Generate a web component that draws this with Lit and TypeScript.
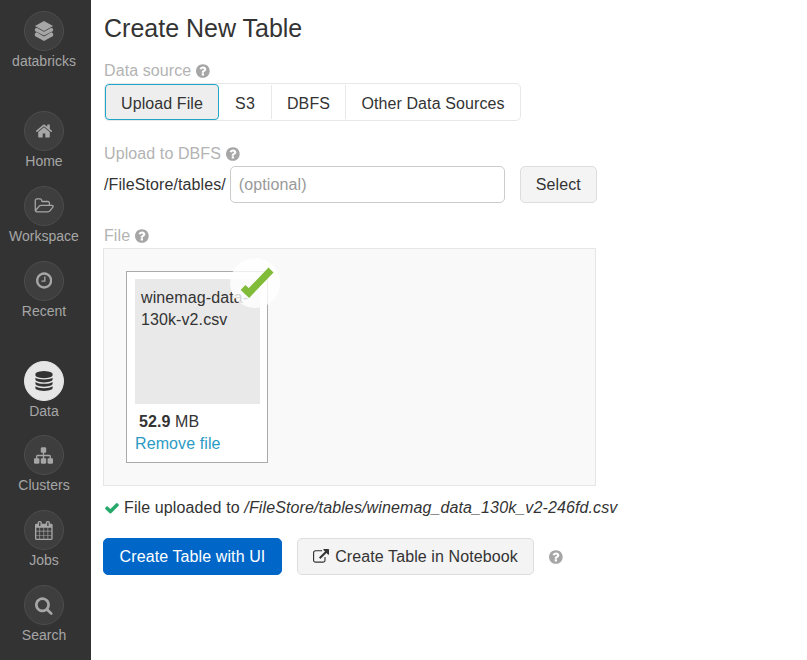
import { LitElement, html, css, svg } from 'lit';
import { customElement } from 'lit/decorators.js';

// font-awesome 4 glyphs, [viewBox width, path]
const ICONS: Record<string, [number, string]> = {
  home: [1792, 'M1472 992v480q0 26-19 45t-45 19h-384v-384h-256v384h-384q-26 0-45-19t-19-45v-480q0-1 .5-3t.5-3l575-474 575 474q1 2 1 6zm223-69l-62 74q-8 9-21 11h-3q-13 0-21-7l-692-577-692 577q-12 8-24 7-13-2-21-11l-62-74q-8-10-7-23.500t11-21.500l719-599q32-26 76-26t76 26l244 204v-195q0-14 9-23t23-9h192q14 0 23 9t9 23v408l219 182q10 8 11 21.500t-7 23.500z'],
  folder: [1976, 'M1845 931q0-35-53-35h-1088q-40 0-85.500 21.500t-71.500 52.500l-294 363q-18 24-18 40 0 35 53 35h1088q40 0 86-22t71-53l294-363q18-22 18-39zm-1141-163h768v-160q0-40-28-68t-68-28h-576q-40 0-68-28t-28-68v-64q0-40-28-68t-68-28h-320q-40 0-68 28t-28 68v853l256-315q44-53 116-87.500t140-34.500zm1269 163q0 62-46 120l-295 363q-43 53-116 87.500t-140 34.500h-1088q-92 0-158-66t-66-158v-960q0-92 66-158t158-66h320q92 0 158 66t66 158v32h544q92 0 158 66t66 158v160h192q54 0 99 24.500t67 70.500q15 32 15 68z'],
  clock: [1536, 'M896 544v448q0 14-9 23t-23 9h-320q-14 0-23-9t-9-23v-64q0-14 9-23t23-9h224v-352q0-14 9-23t23-9h64q14 0 23 9t9 23zm416 352q0-148-73-273t-198-198-273-73-273 73-198 198-73 273 73 273 198 198 273 73 273-73 198-198 73-273zm224 0q0 209-103 385.500t-279.500 279.500-385.500 103-385.500-103-279.500-279.500-103-385.500 103-385.500 279.500-279.500 385.500-103 385.500 103 279.500 279.500 103 385.500z'],
  database: [1792, 'M896 768q237 0 443-43t325-127v170q0 69-103 128t-280 93.500-385 34.500-385-34.500-280-93.500-103-128v-170q119 84 325 127t443 43zm0 768q237 0 443-43t325-127v170q0 69-103 128t-280 93.500-385 34.500-385-34.500-280-93.500-103-128v-170q119 84 325 127t443 43zm0-384q237 0 443-43t325-127v170q0 69-103 128t-280 93.500-385 34.500-385-34.500-280-93.500-103-128v-170q119 84 325 127t443 43zm0-1152q208 0 385 34.500t280 93.500 103 128v128q0 69-103 128t-280 93.500-385 34.500-385-34.500-280-93.500-103-128v-128q0-69 103-128t280-93.500 385-34.500z'],
  sitemap: [1792, 'M1792 1248v320q0 40-28 68t-68 28h-320q-40 0-68-28t-28-68v-320q0-40 28-68t68-28h96v-192h-512v192h96q40 0 68 28t28 68v320q0 40-28 68t-68 28h-320q-40 0-68-28t-28-68v-320q0-40 28-68t68-28h96v-192h-512v192h96q40 0 68 28t28 68v320q0 40-28 68t-68 28h-320q-40 0-68-28t-28-68v-320q0-40 28-68t68-28h96v-192q0-52 38-90t90-38h512v-192h-96q-40 0-68-28t-28-68v-320q0-40 28-68t68-28h320q40 0 68 28t28 68v320q0 40-28 68t-68 28h-96v192h512q52 0 90 38t38 90v192h96q40 0 68 28t28 68z'],
  calendar: [1664, 'M128 1664h288v-288h-288v288zm352 0h320v-288h-320v288zm-352-352h288v-320h-288v320zm352 0h320v-320h-320v320zm-352-384h288v-288h-288v288zm736 736h320v-288h-320v288zm-384-736h320v-288h-320v288zm768 736h288v-288h-288v288zm-384-352h320v-320h-320v320zm-352-864v-288q0-13-9.500-22.500t-22.500-9.500h-64q-13 0-22.500 9.500t-9.500 22.500v288q0 13 9.500 22.500t22.500 9.500h64q13 0 22.500-9.500t9.500-22.500zm736 864h288v-320h-288v320zm-384-384h320v-288h-320v288zm384 0h288v-288h-288v288zm32-480v-288q0-13-9.500-22.500t-22.500-9.500h-64q-13 0-22.500 9.500t-9.500 22.500v288q0 13 9.500 22.500t22.500 9.500h64q13 0 22.500-9.500t9.500-22.500zm384-64v1280q0 52-38 90t-90 38h-1408q-52 0-90-38t-38-90v-1280q0-52 38-90t90-38h128v-96q0-66 47-113t113-47h64q66 0 113 47t47 113v96h384v-96q0-66 47-113t113-47h64q66 0 113 47t47 113v96h128q52 0 90 38t38 90z'],
  search: [1664, 'M1152 832q0-185-131.500-316.500t-316.500-131.500-316.500 131.500-131.500 316.500 131.500 316.500 316.500 131.500 316.500-131.500 131.500-316.500zm512 832q0 52-38 90t-90 38q-54 0-90-38l-343-342q-179 124-399 124-143 0-273.500-55.500t-225-150-150-225-55.500-273.500 55.500-273.500 150-225 225-150 273.500-55.500 273.500 55.500 225 150 150 225 55.500 273.500q0 220-124 399l343 343q37 37 37 90z'],
  check: [1792, 'M1671 566q0 40-28 68l-724 724-136 136q-28 28-68 28t-68-28l-136-136-362-362q-28-28-28-68t28-68l136-136q28-28 68-28t68 28l294 295 656-657q28-28 68-28t68 28l136 136q28 28 28 68z'],
  external: [1792, 'M1408 928v320q0 119-84.500 203.500t-203.500 84.500h-832q-119 0-203.500-84.500t-84.500-203.500v-832q0-119 84.500-203.500t203.500-84.500h704q14 0 23 9t9 23v64q0 14-9 23t-23 9h-704q-66 0-113 47t-47 113v832q0 66 47 113t113 47h832q66 0 113-47t47-113v-320q0-14 9-23t23-9h64q14 0 23 9t9 23zm384-864v512q0 26-19 45t-45 19-45-19l-176-176-652 652q-10 10-23 10t-23-10l-114-114q-10-10-10-23t10-23l652-652-176-176q-19-19-19-45t19-45 45-19h512q26 0 45 19t19 45z'],
  question: [1536, 'M896 1376v-192q0-14-9-23t-23-9h-192q-14 0-23 9t-9 23v192q0 14 9 23t23 9h192q14 0 23-9t9-23zm256-672q0-88-55.500-163t-138.500-116-170-41q-243 0-371 213-15 24 8 42l132 100q7 6 19 6 16 0 25-12 53-68 86-92 34-24 86-24 48 0 85.500 26t37.500 59q0 38-20 61t-68 45q-63 28-115.500 86.500t-52.500 125.500v36q0 14 9 23t23 9h192q14 0 23-9t9-23q0-19 21.500-49.500t54.500-49.500q32-18 49-28.500t46-35 44.500-48 28-60.500 12.500-81zm384 192q0 209-103 385.500t-279.500 279.500-385.500 103-385.500-103-279.500-279.500-103-385.500 103-385.500 279.500-279.500 385.500-103 385.500 103 279.500 279.500 103 385.500z'],
};

const faIcon = (name: string, size: number) => {
  const [w, d] = ICONS[name];
  return html`<svg class="fa" width=${(size * w) / 1792} height=${size} viewBox="0 0 ${w} 1792" fill="currentColor">
    ${svg`<path d=${d}></path>`}
  </svg>`;
};

const stackLogo = html`<svg width="20" height="20" viewBox="0 0 22 22" fill="currentColor">
  <path d="M11 0l10 5.500-10 5.500L1 5.500z"></path>
  <path d="M1 8.500l2-1.100 8 4.400 8-4.400 2 1.100v2.600L11 16 1 11.100z"></path>
  <path d="M1 13.500l2-1 8 4.500 8-4.500 2 1V16.500L11 22 1 16.500z"></path>
</svg>`;

const NAV = [
  { label: 'Home', icon: 'home', size: 18, gap: 'first' },
  { label: 'Workspace', icon: 'folder', size: 18 },
  { label: 'Recent', icon: 'clock', size: 19 },
  { label: 'Data', icon: 'database', size: 20, active: true, gap: 'group' },
  { label: 'Clusters', icon: 'sitemap', size: 19 },
  { label: 'Jobs', icon: 'calendar', size: 19 },
  { label: 'Search', icon: 'search', size: 19 },
];

@customElement('app-root')
export class AppRoot extends LitElement {
  static styles = css`
    :host {
      display: flex;
      height: 660px;
      overflow: hidden;
      background: #fff;
      color: #333;
      font-family: 'Liberation Sans', Arial, sans-serif;
      font-size: 16px;
    }
    .fa {
      display: block;
      flex: none;
    }

    nav {
      flex: none;
      width: 91px;
      box-sizing: border-box;
      padding-top: 11px;
      background: #333;
      display: flex;
      flex-direction: column;
      align-items: center;
      padding-right: 3px;
    }
    .nav-item {
      display: flex;
      flex-direction: column;
      align-items: center;
      height: 75px;
      color: #a6a6a6;
      font-size: 14px;
    }
    .nav-item.first {
      margin-top: 25px;
    }
    .nav-item.group {
      margin-top: 25px;
    }
    .disc {
      width: 40px;
      height: 40px;
      box-sizing: border-box;
      border-radius: 50%;
      border: 1px solid #4d4d4d;
      background: #3e3e3e;
      display: flex;
      align-items: center;
      justify-content: center;
      color: #a6a6a6;
    }
    .nav-item.active .disc {
      background: #e6e6e6;
      border-color: #e6e6e6;
      color: #333;
    }
    .nav-label {
      margin-top: 2px;
      line-height: 16px;
    }

    main {
      flex: 1;
      min-width: 0;
      padding: 10px 0 0 12px;
      letter-spacing: 0.1px;
    }
    h1 {
      margin: 0 0 0 1px;
      font-size: 25px;
      font-weight: 400;
      line-height: 36px;
      letter-spacing: 0;
    }
    .field-label {
      display: flex;
      align-items: center;
      gap: 5px;
      height: 20px;
      box-sizing: border-box;
      padding-top: 1px;
      margin: 22px 0 3px 1px;
      color: #b3b3b3;
    }
    .field-label .fa {
      color: #a6a6a6;
    }
    .field-label.top {
      margin-top: 14px;
    }

    .tabs {
      display: grid;
      grid-template-columns: 114px 52px 74px 1fr;
      width: 417px;
      margin-left: 1px;
      height: 38px;
      box-sizing: border-box;
      border: 1px solid #e8e8e8;
      border-radius: 5px;
    }
    .tab {
      display: flex;
      align-items: center;
      justify-content: center;
      padding-top: 3px;
      border-left: 1px solid #e8e8e8;
      margin: 1px 0;
    }
    .tab.active {
      margin: 0;
      background: #eee;
      border: 1px solid #1ea5c9;
      border-radius: 4px;
    }
    .tab.active + .tab {
      border-left: 0;
    }

    .path-row {
      display: flex;
      align-items: center;
      height: 37px;
      padding-left: 1px;
    }
    .path-input {
      width: 275px;
      height: 37px;
      box-sizing: border-box;
      margin-left: 4px;
      padding: 0 8px;
      border: 1px solid #ccc;
      border-radius: 5px;
      color: #999;
      display: flex;
      align-items: center;
    }
    .btn {
      height: 37px;
      box-sizing: border-box;
      display: flex;
      align-items: center;
      justify-content: center;
      border: 1px solid #ddd;
      border-radius: 5px;
      background: #f4f4f4;
    }
    .select {
      width: 77px;
      margin-left: 15px;
    }

    .dropzone {
      width: 493px;
      height: 238px;
      box-sizing: border-box;
      padding: 22px;
      border: 1px solid #e6e6e6;
      background: #f9f9f9;
    }
    .file-card {
      position: relative;
      width: 142px;
      height: 192px;
      box-sizing: border-box;
      padding: 7px 7px 0 8px;
      border: 1px solid #aaa;
      background: #fff;
    }
    .thumb {
      width: 125px;
      height: 125px;
      box-sizing: border-box;
      padding: 8px 6px;
      background: #e9e9e9;
      line-height: 22px;
    }
    .size {
      margin: 7px 0 0 4px;
      line-height: 22px;
    }
    .remove {
      line-height: 22px;
      color: #2a9bc4;
    }
    .done {
      position: absolute;
      left: 103px;
      top: -14px;
      width: 50px;
      height: 50px;
      border-radius: 50%;
      background: rgba(255, 255, 255, 0.8);
    }
    .done svg {
      display: block;
    }

    .status {
      display: flex;
      align-items: center;
      gap: 4px;
      height: 20px;
      box-sizing: border-box;
      padding-top: 1px;
      margin: 11px 0 21px 1px;
      letter-spacing: 0.12px;
    }
    .status .fa {
      color: #27a86b;
    }
    .actions {
      display: flex;
      align-items: center;
    }
    .primary {
      width: 179px;
      border-color: #0067c9;
      background: #0067c9;
      color: #fff;
    }
    .notebook {
      width: 237px;
      margin-left: 15px;
      gap: 6px;
    }
    .help {
      margin-left: 15px;
      color: #a6a6a6;
    }
  `;

  render() {
    return html`
      <nav>
        <div class="nav-item">
          <div class="disc">${stackLogo}</div>
          <div class="nav-label">databricks</div>
        </div>
        ${NAV.map(
          (n) => html`
            <div class="nav-item ${n.gap ?? ''} ${n.active ? 'active' : ''}">
              <div class="disc">${faIcon(n.icon, n.size)}</div>
              <div class="nav-label">${n.label}</div>
            </div>
          `
        )}
      </nav>
      <main>
        <h1>Create New Table</h1>

        <div class="field-label top">Data source ${faIcon('question', 16)}</div>
        <div class="tabs">
          <div class="tab active">Upload File</div>
          <div class="tab">S3</div>
          <div class="tab">DBFS</div>
          <div class="tab">Other Data Sources</div>
        </div>

        <div class="field-label">Upload to DBFS ${faIcon('question', 16)}</div>
        <div class="path-row">
          <span>/FileStore/tables/</span>
          <div class="path-input">(optional)</div>
          <div class="btn select">Select</div>
        </div>

        <div class="field-label">File ${faIcon('question', 16)}</div>
        <div class="dropzone">
          <div class="file-card">
            <div class="thumb">winemag-data-130k-v2.csv</div>
            <div class="size"><b>52.9</b> MB</div>
            <div class="remove">Remove file</div>
            <div class="done">
              <svg width="50" height="50" viewBox="0 0 50 50">
                <polyline points="13,29.500 19,35 41,12" fill="none" stroke="#80bb3a" stroke-width="7"></polyline>
              </svg>
            </div>
          </div>
        </div>

        <div class="status">
          ${faIcon('check', 16)}
          <span>File uploaded to <i>/FileStore/tables/winemag_data_130k_v2-246fd.csv</i></span>
        </div>

        <div class="actions">
          <div class="btn primary">Create Table with UI</div>
          <div class="btn notebook">${faIcon('external', 16)}<span>Create Table in Notebook</span></div>
          <div class="help">${faIcon('question', 16)}</div>
        </div>
      </main>
    `;
  }
}
